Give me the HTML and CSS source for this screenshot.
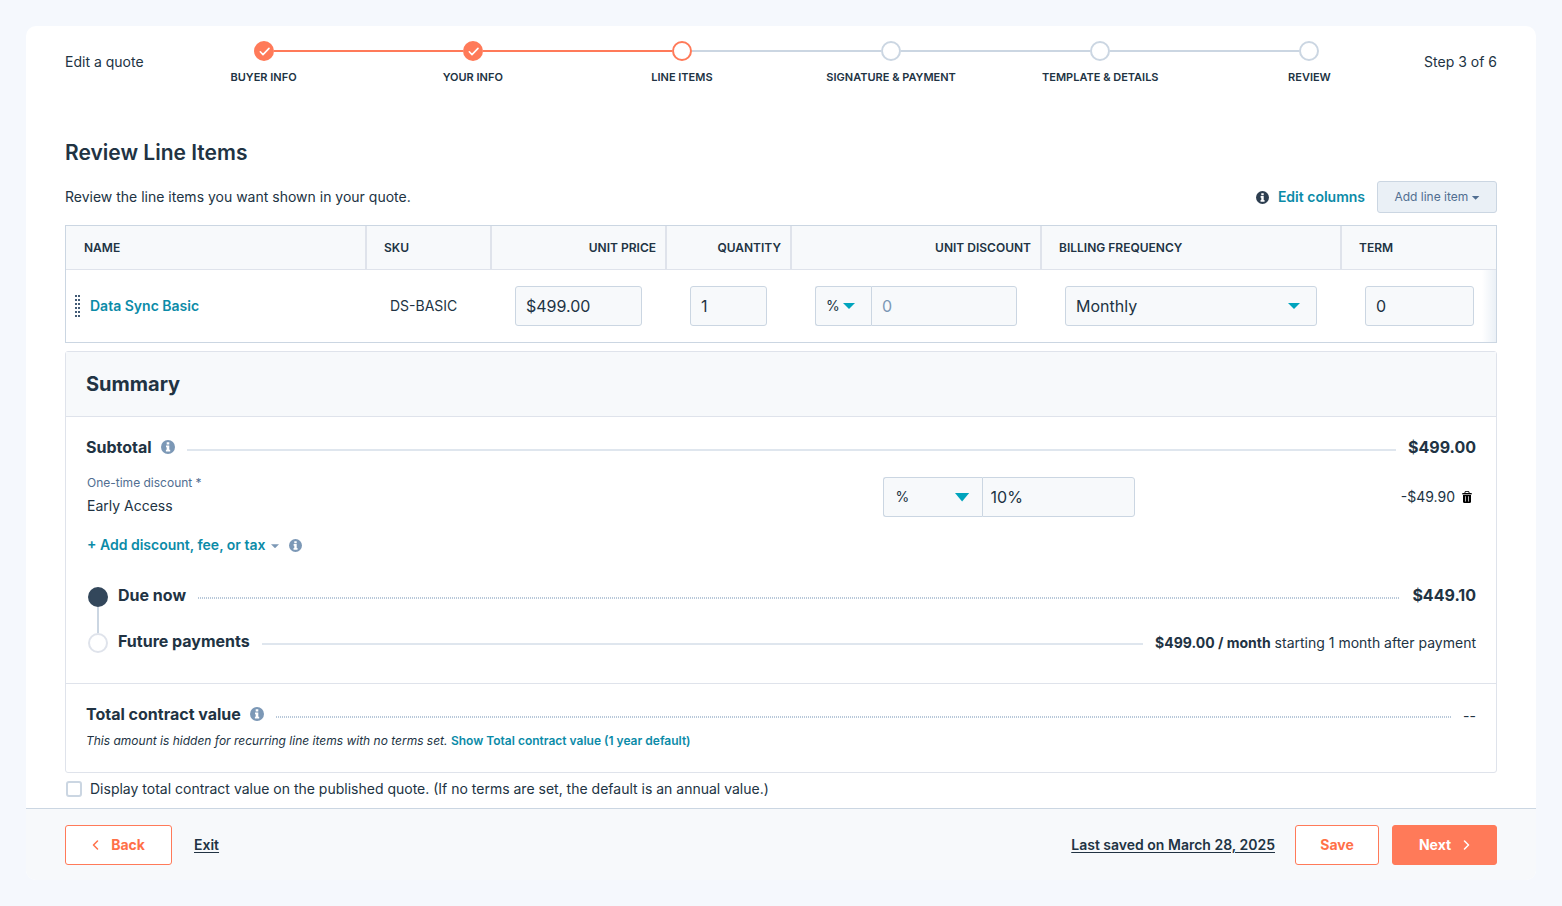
FILE: index.html
```html
<!DOCTYPE html>
<html lang="en">
<head>
<meta charset="utf-8">
<meta name="viewport" content="width=device-width, initial-scale=1">
<title>Edit a quote</title>
<link rel="stylesheet" href="styles.css">
</head>
<body>
<svg class="sprite" aria-hidden="true">
  <symbol id="info" viewBox="0 0 14 14">
    <circle cx="7" cy="7" r="7" fill="currentColor"/>
    <path fill="#fff" d="M5.700 2.300h2.600v2.200H5.700zM5 5.500h3.300v4.300h.9v1.700H4.900V9.800h.8V7.200H5z"/>
  </symbol>
  <symbol id="check" viewBox="0 0 20 20">
    <path fill="none" stroke="#fff" stroke-width="1.6" stroke-linecap="round" stroke-linejoin="round" d="M6.300 10.800l2.700 2.800 6-6.200"/>
  </symbol>
</svg>
<div class="card">
  <header class="wizard">
    <span class="wizard-title">Edit a quote</span>
    <ol class="steps">
      <li class="step done"><span class="track"><span class="dot"><svg width="20" height="20"><use href="#check"/></svg></span></span><span class="step-label">BUYER INFO</span></li>
      <li class="step done"><span class="track"><span class="dot"><svg width="20" height="20"><use href="#check"/></svg></span></span><span class="step-label">YOUR INFO</span></li>
      <li class="step current"><span class="track"><span class="dot"></span></span><span class="step-label">LINE ITEMS</span></li>
      <li class="step"><span class="track"><span class="dot"></span></span><span class="step-label">SIGNATURE &amp; PAYMENT</span></li>
      <li class="step"><span class="track"><span class="dot"></span></span><span class="step-label">TEMPLATE &amp; DETAILS</span></li>
      <li class="step"><span class="track"><span class="dot"></span></span><span class="step-label">REVIEW</span></li>
    </ol>
    <span class="wizard-count">Step 3 of 6</span>
  </header>

  <main class="content">
    <h1>Review Line Items</h1>
    <div class="toolbar">
      <p>Review the line items you want shown in your quote.</p>
      <div class="toolbar-actions">
        <svg class="info dark" width="13" height="13"><use href="#info"/></svg>
        <a class="link edit-columns" href="#">Edit columns</a>
        <button class="btn-add" type="button">Add line item <span class="mini-caret"></span></button>
      </div>
    </div>

    <table class="items">
      <colgroup><col class="c-name"><col class="c-sku"><col class="c-price"><col class="c-qty"><col class="c-discount"><col class="c-billing"><col></colgroup>
      <thead>
        <tr>
          <th scope="col">NAME</th>
          <th scope="col">SKU</th>
          <th scope="col" class="num">UNIT PRICE</th>
          <th scope="col" class="num">QUANTITY</th>
          <th scope="col" class="num">UNIT DISCOUNT</th>
          <th scope="col">BILLING FREQUENCY</th>
          <th scope="col">TERM</th>
        </tr>
      </thead>
      <tbody>
        <tr>
          <td class="name-cell"><div class="name"><span class="grip"></span><a class="link" href="#">Data Sync Basic</a></div></td>
          <td>DS-BASIC</td>
          <td><input class="field" type="text" aria-label="Unit price" value="$499.00"></td>
          <td><input class="field" type="text" aria-label="Quantity" value="1"></td>
          <td>
            <div class="group">
              <span class="select unit"><select class="field" aria-label="Discount type"><option>%</option></select></span>
              <input class="field" type="text" aria-label="Unit discount" placeholder="0">
            </div>
          </td>
          <td><span class="select billing"><select class="field" aria-label="Billing frequency"><option>Monthly</option></select></span></td>
          <td class="edge"><input class="field" type="text" aria-label="Term" value="0"></td>
        </tr>
      </tbody>
    </table>

    <section class="summary">
      <h2>Summary</h2>
      <div class="totals">
        <div class="line">
          <h3>Subtotal</h3>
          <svg class="info" width="14" height="14"><use href="#info"/></svg>
          <span class="leader"></span>
          <strong class="amount">$499.00</strong>
        </div>
        <div class="discount">
          <div class="discount-name">
            <label for="discount-value">One-time discount *</label>
            <span>Early Access</span>
          </div>
          <div class="group">
            <span class="select kind"><select class="field" aria-label="One-time discount type"><option>%</option></select></span>
            <input class="field" id="discount-value" type="text" value="10%">
          </div>
          <div class="discount-amount">
            <span>-$49.90</span>
            <button class="trash" type="button" aria-label="Remove discount">
              <svg width="10" height="12" viewBox="0 0 10 12"><path d="M3 2V1.200C3 .6 3.400.3 4 .3h2c.6 0 1 .3 1 .9V2" fill="none" stroke="#000"/><path d="M.3 2h9.400v1.400H.3z"/><path fill-rule="evenodd" d="M1 4h8v6.800c0 .7-.4 1.200-1.100 1.200H2.100C1.400 12 1 11.500 1 10.800zM3 5.200v5.300h.7V5.200zm3.300 0v5.300H7V5.200z"/></svg>
            </button>
          </div>
        </div>
        <div class="add-row">
          <button class="link add-discount" type="button">+ Add discount, fee, or tax <span class="mini-caret soft"></span></button>
          <svg class="info" width="13" height="13"><use href="#info"/></svg>
        </div>
        <div class="schedule">
          <div class="phase now">
            <span class="marker"></span>
            <div class="line">
              <h3>Due now</h3>
              <span class="leader dotted"></span>
              <strong class="amount">$449.10</strong>
            </div>
          </div>
          <div class="phase">
            <span class="marker"></span>
            <div class="line">
              <h3>Future payments</h3>
              <span class="leader"></span>
              <span class="value"><strong>$499.00 / month</strong> starting 1 month after payment</span>
            </div>
          </div>
        </div>
      </div>
      <div class="contract">
        <div class="line">
          <h3>Total contract value</h3>
          <svg class="info" width="14" height="14"><use href="#info"/></svg>
          <span class="leader dotted"></span>
          <span class="value">--</span>
        </div>
        <p class="note"><em>This amount is hidden for recurring line items with no terms set.</em> <a class="link" href="#">Show Total contract value (1 year default)</a></p>
      </div>
    </section>

    <label class="display"><input type="checkbox"> Display total contract value on the published quote. (If no terms are set, the default is an annual value.)</label>
  </main>

  <footer class="footer">
    <button class="btn outline back" type="button"><svg width="7" height="10" viewBox="0 0 7 10"><path d="M5.500 1L1.500 5l4 4"/></svg>Back</button>
    <a class="plain" href="#">Exit</a>
    <a class="plain saved" href="#">Last saved on March 28, 2025</a>
    <button class="btn outline save" type="button">Save</button>
    <button class="btn solid next" type="button">Next<svg width="7" height="10" viewBox="0 0 7 10"><path d="M1.500 1l4 4-4 4"/></svg></button>
  </footer>
</div>
</body>
</html>
```

FILE: styles.css
```css
*, *::before, *::after { box-sizing: border-box; }

body {
  margin: 0;
  padding: 26px;
  background: #f5f8fd;
  color: #213343;
  font: 400 14px/20px Inter, "Open Sans", sans-serif;
}

h1, h2, h3, p, ol { margin: 0; padding: 0; }
button, input, select { font: inherit; color: inherit; }
button { cursor: pointer; }
.sprite { display: none; }

.card {
  background: #fff;
  border-radius: 10px;
  overflow: hidden;
}

/* Step indicator */
.wizard {
  display: flex;
  align-items: flex-start;
  padding: 15px 39px 0;
}
.wizard-title { width: 94px; padding-top: 11px; }
.wizard-count { width: 83px; padding-top: 11px; text-align: right; white-space: nowrap; }
.steps { display: flex; flex: 1; list-style: none; }
.step { flex: 1 1 0; text-align: center; }
.track { display: flex; align-items: center; }
.track::before, .track::after {
  content: "";
  flex: 1;
  height: 2px;
  background: #cbd6e2;
}
.done .track::before, .done .track::after, .current .track::before { background: #ff7a59; }
.step:first-child .track::before, .step:last-child .track::after { background: none; }
.dot {
  width: 20px;
  height: 20px;
  border: 2px solid #cbd6e2;
  border-radius: 50%;
}
.done .dot { border: 0; background: #ff7a59; }
.done .dot svg { display: block; }
.current .dot { border-color: #ff7a59; }
.step-label {
  display: block;
  margin-top: 8px;
  font-size: 11px;
  font-weight: 600;
  line-height: 16px;
}

/* Page body */
.content { padding: 55px 39px 9px; }
h1 { font-size: 21px; font-weight: 600; line-height: 26px; }
.toolbar {
  display: flex;
  align-items: center;
  justify-content: space-between;
  margin-top: 15px;
}
.toolbar-actions { display: flex; align-items: center; }
.link {
  color: #0b8ba8;
  font-weight: 600;
  text-decoration: none;
}
.edit-columns { margin: 0 12px 0 9px; }
.info { flex: none; color: #7c98b6; }
.info.dark { color: #2d3e50; }
.btn-add {
  width: 120px;
  height: 32px;
  padding: 0;
  border: 1px solid #cbd6e2;
  border-radius: 3px;
  background: #eaf0f6;
  color: #506e91;
  font-size: 12px;
  white-space: nowrap;
}
.mini-caret {
  display: inline-block;
  width: 8px;
  height: 4px;
  vertical-align: middle;
  background: #506e91;
  clip-path: polygon(0 0, 100% 0, 50% 100%);
}
.mini-caret.soft { margin-left: 2px; background: #7c98b6; }

/* Line items */
.items {
  width: 100%;
  margin-top: 12px;
  border: 1px solid #cbd6e2;
  border-collapse: separate;
  border-spacing: 0;
  table-layout: fixed;
}
.c-name, .c-billing { width: 300px; }
.c-sku, .c-qty { width: 125px; }
.c-price { width: 175px; }
.c-discount { width: 250px; }
th {
  height: 44px;
  padding: 0 9px 0 17px;
  border: 1px solid #dfe3eb;
  border-top: 0;
  background: #f7f9fb;
  font-size: 12px;
  font-weight: 600;
  text-align: left;
}
th:first-child { padding-left: 18px; border-left: 0; }
th:last-child { border-right: 0; }
th.num { text-align: right; }
td { padding: 16px 24px; }
.name-cell { padding-left: 9px; }
.name { display: flex; align-items: center; gap: 10px; }
.grip {
  width: 5px;
  height: 23px;
  background:
    repeating-linear-gradient(#fff0 0 2px, #fff 2px 4px),
    linear-gradient(to right, #425b76 2px, #fff 2px 3px, #425b76 3px);
}
.edge { padding-right: 22px; background: linear-gradient(to left, #eaf0f6, #fff 14px); }

.field {
  display: block;
  width: 100%;
  height: 40px;
  padding: 0 10px;
  border: 1px solid #cbd6e2;
  border-radius: 3px;
  background: #f7f9fb;
  font-size: 16px;
  outline: 0;
  appearance: none;
}
.field::placeholder { color: #7c98b6; opacity: 1; }
.select { display: grid; align-items: center; }
.select > select, .select::after { grid-area: 1 / 1; }
.select::after {
  content: "";
  width: 12px;
  height: 6px;
  margin-right: 16px;
  justify-self: end;
  background: #00a4bd;
  clip-path: polygon(0 0, 100% 0, 50% 100%);
  pointer-events: none;
}
.group { display: flex; }
.group .select { flex: none; }
.group .select .field { border-right: 0; border-radius: 3px 0 0 3px; }
.group > .field { flex: 1; min-width: 0; border-radius: 0 3px 3px 0; }
.unit { width: 56px; }
.unit .field { font-size: 14px; }
.kind { width: 99px; }
.kind .field { padding-left: 12px; font-size: 14px; }
.kind + .field { padding-left: 8px; }
.kind::after { width: 15px; height: 9px; margin-right: 12px; }
.billing::after { margin-right: 17px; }

/* Summary */
.summary {
  margin-top: 8px;
  border: 1px solid #dfe3eb;
  border-radius: 3px;
}
h2 {
  padding: 20px;
  border-bottom: 1px solid #dfe3eb;
  background: #f7f9fb;
  font-size: 20px;
  font-weight: 700;
  line-height: 24px;
}
h3 { font-size: 16px; font-weight: 700; line-height: 20px; white-space: nowrap; }
.totals { padding: 20px 20px 32px; }
.line { display: flex; align-items: center; flex: 1; height: 20px; }
.line .info { margin-left: 9px; }
.leader {
  flex: 1;
  height: 2px;
  margin: 6px 12px 0;
  background: #dfe6ee;
}
.leader.dotted { background: repeating-linear-gradient(to right, #b8c8d9 0 1px, #fff 1px 2px); }
.amount { font-size: 16px; }
.value { padding-top: 4px; white-space: nowrap; }
.discount {
  display: grid;
  grid-template-columns: 7fr 252px 3fr;
  align-items: end;
  min-height: 44px;
  margin-top: 16px;
}
.discount-name { display: grid; gap: 3px; align-self: start; padding-left: 1px; }
.discount-name label { color: #506e91; font-size: 12px; }
.discount-amount {
  display: flex;
  justify-content: flex-end;
  align-items: center;
  gap: 7px;
  height: 40px;
  padding-right: 4px;
}
.trash { padding: 0; border: 0; background: none; }
.trash svg { display: block; }
.add-row { display: flex; align-items: center; gap: 10px; margin-top: 18px; padding-left: 1px; }
.add-discount { padding: 0; border: 0; background: none; }
.schedule { margin-top: 30px; padding-left: 2px; }
.phase { display: flex; align-items: flex-start; gap: 10px; }
.phase.now { min-height: 46px; }
.marker {
  display: flex;
  flex-direction: column;
  align-items: center;
  align-self: stretch;
  margin: 2px 0 -2px;
}
.marker::before {
  content: "";
  width: 20px;
  height: 20px;
  border: 2px solid #dfe3eb;
  border-radius: 50%;
}
.now .marker::before { border-color: #33475b; background: #33475b; }
.now .marker::after { content: ""; flex: 1; width: 2px; background: #cbd6e2; }
.contract { padding: 20px 20px 21px; border-top: 1px solid #dfe3eb; }
.note { margin-top: 7px; font-size: 12px; }

.display { display: flex; align-items: center; gap: 8px; margin-top: 6px; padding-left: 1px; }
.display input {
  width: 16px;
  height: 16px;
  margin: 0;
  border: 2px solid #cbd6e2;
  border-radius: 3px;
  background: #fff;
  appearance: none;
}

/* Footer */
.footer {
  display: flex;
  align-items: center;
  padding: 16px 39px 15px;
  border-top: 1px solid #cbd6e2;
  background: #f7f9fb;
}
.btn {
  display: flex;
  align-items: center;
  justify-content: center;
  gap: 12px;
  height: 40px;
  padding: 0;
  border: 1px solid #ff7a59;
  border-radius: 3px;
  font-weight: 700;
}
.btn svg { fill: none; stroke: currentColor; stroke-width: 1.5; stroke-linecap: round; stroke-linejoin: round; }
.outline { background: #fff; color: #ff7048; }
.solid { background: #ff7a59; color: #fff; }
.back { width: 107px; }
.save { width: 84px; margin: 0 13px 0 20px; }
.next { width: 105px; }
.plain { color: inherit; font-weight: 600; text-underline-offset: 2px; }
.back + .plain { margin-left: 22px; }
.saved { margin-left: auto; }
```
